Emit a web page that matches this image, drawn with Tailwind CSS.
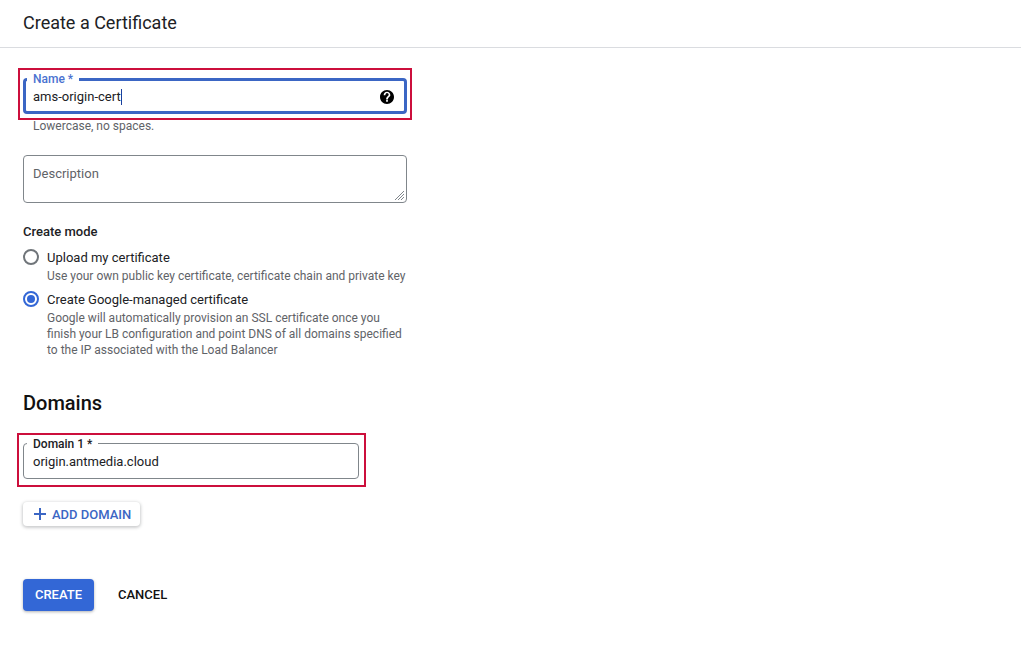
<!DOCTYPE html>
<html lang="en">
<head>
  <meta charset="UTF-8">
  <title>Create a Certificate</title>
  <script src="https://cdn.jsdelivr.net/npm/@tailwindcss/browser@4"></script>
</head>
<body class="bg-white h-[657px] overflow-hidden font-['Roboto',sans-serif] text-[13px] text-[#202124]">
  <header class="h-[48px] border-b border-[#dadce0] pl-[23px] pt-[11px]">
    <h1 class="text-[18px] leading-[24px]">Create a Certificate</h1>
  </header>
  <main class="px-[23px]">
    <!-- name -->
    <div class="relative w-[384px] h-[36px] mt-[30px] rounded-[4px] border-[3px] border-[#3b66c4]">
      <span class="absolute -top-[9px] left-[1px] bg-white px-[6px] text-[12px] leading-[14px] font-medium text-[#4a72d0]">Name *</span>
      <div class="flex items-center h-full pl-[7px] pr-[9px] pt-[1px] text-[13px]">
        <span>ams-origin-cert</span><span class="w-px h-[16px] bg-[#1a3f9c]"></span>
        <svg class="ml-auto" width="16" height="16" viewBox="0 0 24 24"><path fill="#000" d="M12 1.5C6.2 1.5 1.5 6.2 1.5 12S6.2 22.5 12 22.5 22.500 17.800 22.500 12 17.800 1.500 12 1.500zm1.300 17.500h-2.600v-2.600h2.600V19zm2.700-7.700l-1.200 1.200c-1 1-1.500 1.800-1.500 3.200h-2.600v-.7c0-1.400.5-2.400 1.500-3.400l1.600-1.600c.5-.4.700-1 .700-1.700 0-1.300-1.100-2.400-2.500-2.400S9.500 7.900 9.500 9.300H7c0-2.800 2.200-5 5-5s5 2.200 5 5c0 .800-.4 1.500-1 2z"/></svg>
      </div>
      <div class="absolute -top-[13px] -left-[8px] -right-[8px] -bottom-[9px] border-2 border-[#cc0f3c] pointer-events-none"></div>
    </div>
    <p class="pl-[10px] mt-[4px] text-[12px] leading-[16px] text-[#5f6368]">Lowercase, no spaces.</p>

    <!-- description -->
    <div class="relative w-[384px] h-[48px] mt-[21px] rounded-[4px] border border-[#80868b] pl-[9px] pt-[10px] text-[#5f6368] leading-[16px]">
      Description
      <svg class="absolute right-[1px] bottom-[1px]" width="11" height="11" viewBox="0 0 11 11" stroke="#80868b" stroke-width="1"><path d="M1 10 10 1M4 10l6-6M7 10l3-3"/></svg>
    </div>

    <!-- create mode -->
    <h2 class="mt-[21px] font-medium leading-[16px]">Create mode</h2>
    <div class="flex mt-[9px]">
      <span class="w-[16px] h-[16px] rounded-full border-2 border-[#70757a] shrink-0"></span>
      <div class="ml-[8px]">
        <div class="leading-[18px]">Upload my certificate</div>
        <div class="text-[12px] leading-[16px] mt-[1px] text-[#5f6368] whitespace-nowrap">Use your own public key certificate, certificate chain and private key</div>
      </div>
    </div>
    <div class="flex mt-[7px]">
      <span class="flex items-center justify-center w-[16px] h-[16px] rounded-full border-2 border-[#3367d6] shrink-0"><span class="w-[8px] h-[8px] rounded-full bg-[#3367d6]"></span></span>
      <div class="ml-[8px]">
        <div class="leading-[18px]">Create Google-managed certificate</div>
        <div class="text-[12px] leading-[16px] mt-[1px] text-[#5f6368] w-[358px]">Google will automatically provision an SSL certificate once you finish your LB configuration and point DNS of all domains specified to the IP associated with the Load Balancer</div>
      </div>
    </div>

    <!-- domains -->
    <h2 class="mt-[33px] text-[20px] leading-[24px] font-medium text-[#111]">Domains</h2>
    <div class="relative w-[336px] h-[36px] mt-[28px] rounded-[4px] border border-[#80868b]">
      <span class="absolute -top-[7px] left-[3px] bg-white px-[6px] text-[12px] leading-[14px] font-medium">Domain 1 *</span>
      <div class="flex items-center h-full pl-[9px] pt-[1px]">origin.antmedia.cloud</div>
      <div class="absolute -top-[11px] -left-[7px] -right-[8px] -bottom-[9px] border-2 border-[#cc0f3c] pointer-events-none"></div>
    </div>

    <!-- actions -->
    <button class="flex items-center w-[117px] h-[24px] mt-[23px] pl-[11px] pt-[1px] rounded-[4px] bg-white shadow-[0_1px_3px_1px_rgba(60,64,67,0.25)] text-[13px] font-medium text-[#3b66c4]">
      <svg width="12" height="12" viewBox="0 0 12 12" class="mr-[6px] -mt-[1px]"><path fill="#3b66c4" d="M5 0h2v5h5v2H7v5H5V7H0V5h5z"/></svg>
      ADD DOMAIN
    </button>
    <div class="flex items-center mt-[53px]">
      <button class="w-[71px] h-[32px] rounded-[4px] bg-[#3367d6] shadow-[0_1px_3px_rgba(60,64,67,0.4)] text-white text-[13px] font-medium">CREATE</button>
      <button class="ml-[24px] text-[13px] font-medium text-[#111] -mt-[1px]">CANCEL</button>
    </div>
  </main>
</body>
</html>
